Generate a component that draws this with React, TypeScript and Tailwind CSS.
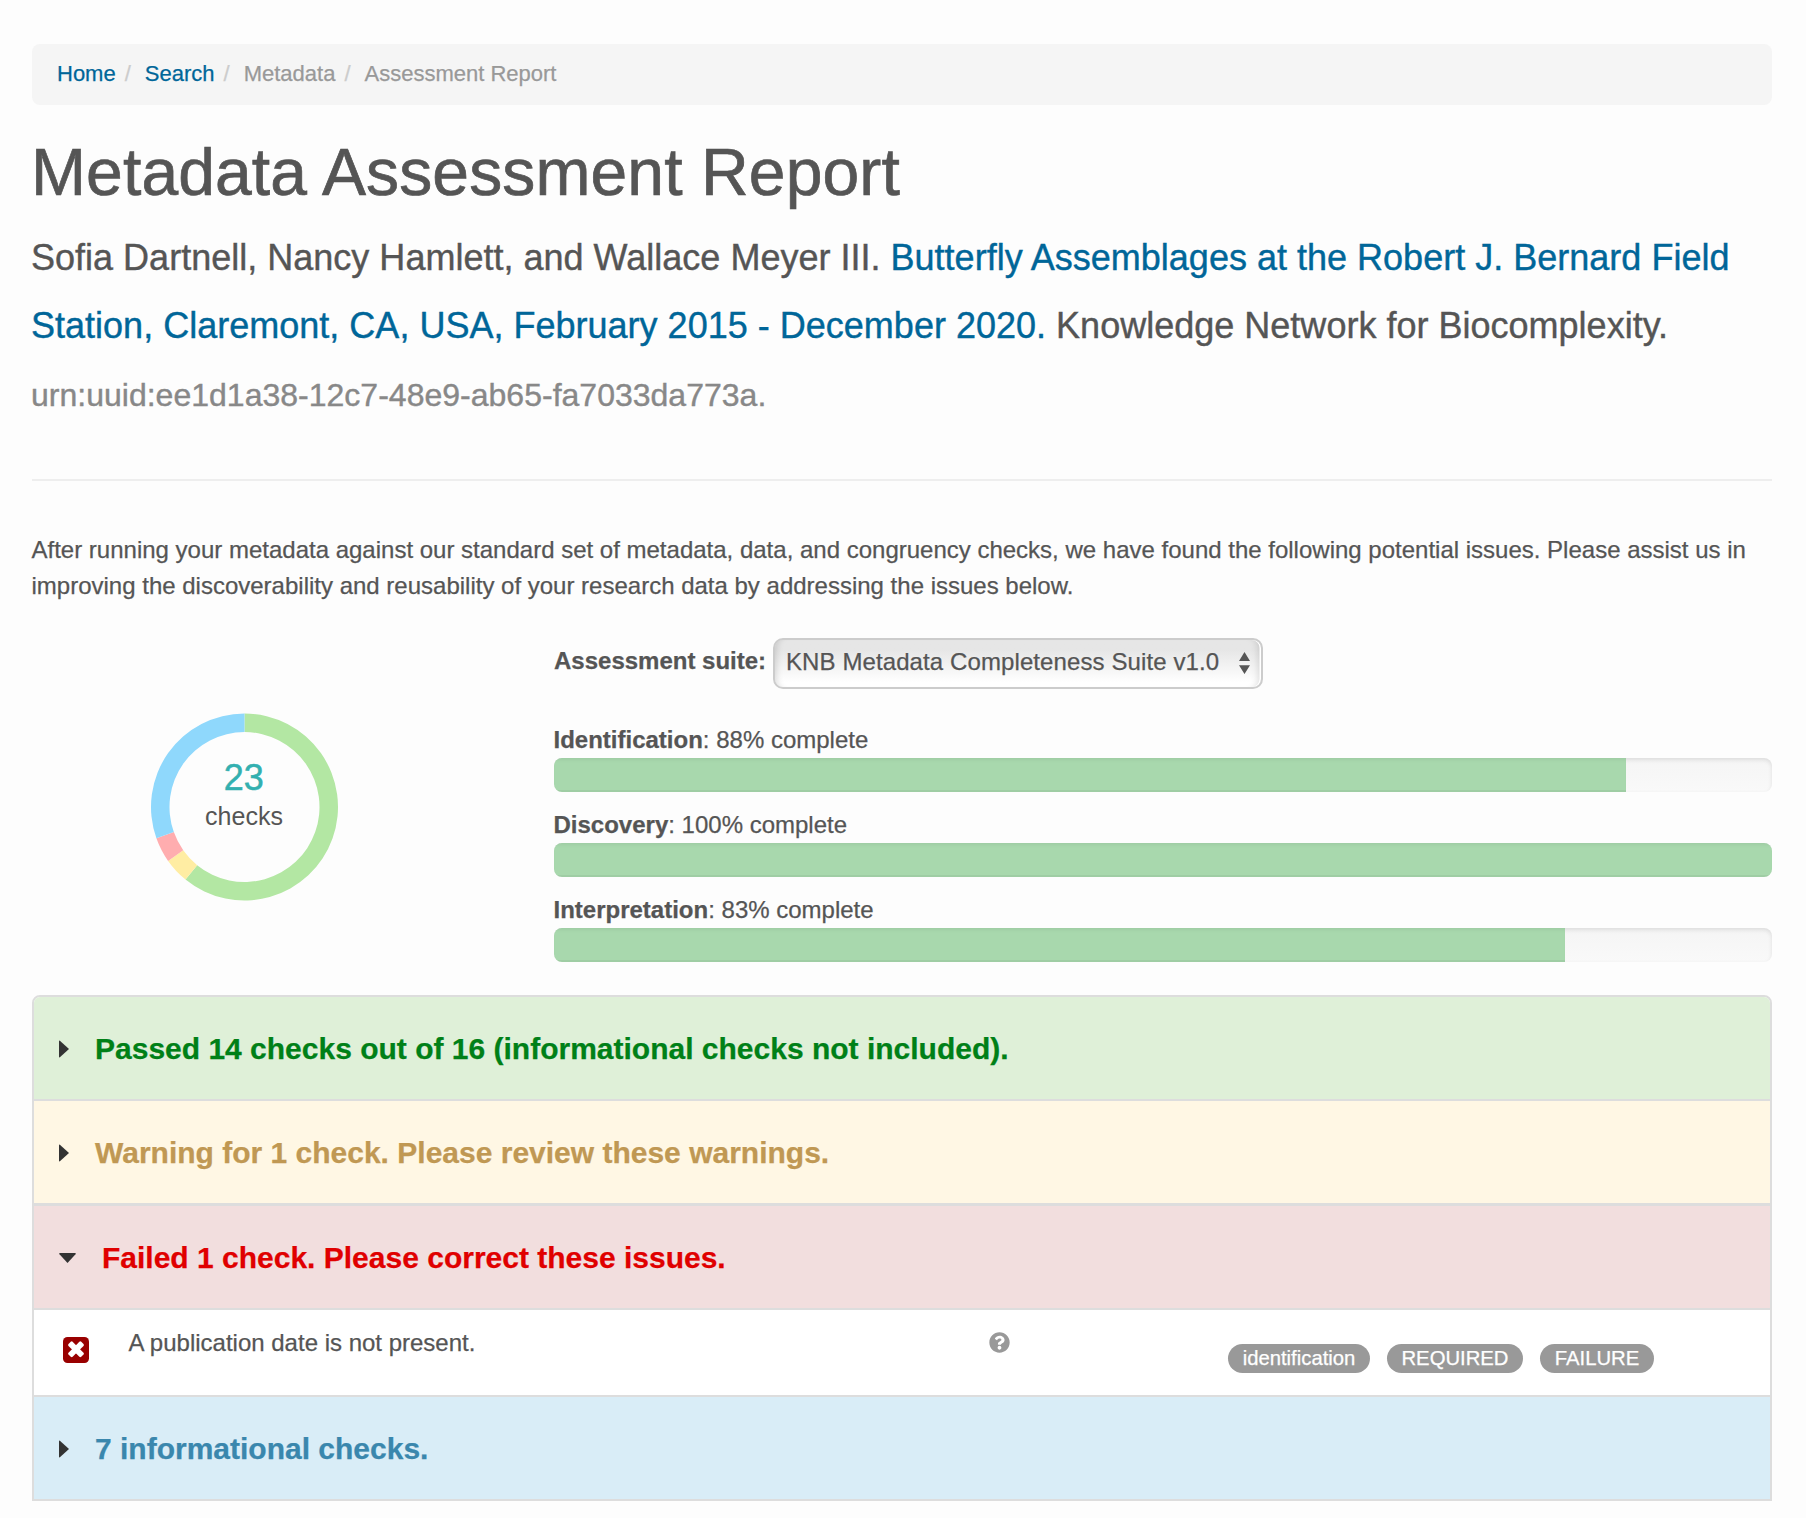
import type { ReactNode } from 'react';
import { FaQuestionCircle } from 'react-icons/fa';

const crumbs = [
  { label: 'Home', link: true },
  { label: 'Search', link: true },
  { label: 'Metadata', link: false },
  { label: 'Assessment Report', link: false },
];

const scores = [
  { name: 'Identification', percent: 88 },
  { name: 'Discovery', percent: 100 },
  { name: 'Interpretation', percent: 83 },
];

const segments = [
  { count: 14, color: '#b3e7a3' },
  { count: 1, color: '#ffeda3' },
  { count: 1, color: '#ffadaf' },
  { count: 7, color: '#8fd8fc' },
];

const TOTAL = 23;

function arcPath(from: number, to: number, outer: number, inner: number) {
  const point = (t: number, r: number) => {
    const a = t * 2 * Math.PI;
    return `${(Math.sin(a) * r).toFixed(3)} ${(-Math.cos(a) * r).toFixed(3)}`;
  };
  const large = to - from > 0.5 ? 1 : 0;
  return `M${point(from, outer)}A${outer} ${outer} 0 ${large} 1 ${point(to, outer)}L${point(to, inner)}A${inner} ${inner} 0 ${large} 0 ${point(from, inner)}Z`;
}

function Donut() {
  let start = 0;
  return (
    <svg className="block h-[188px] w-[188px]" viewBox="-94.5 -94 188 188">
      {segments.map((s) => {
        const from = start / TOTAL;
        start += s.count;
        return <path key={s.color} d={arcPath(from, start / TOTAL, 93.5, 75)} fill={s.color} />;
      })}
      <text x="-0.7" y="-17" textAnchor="middle" fontSize="36" fill="#33b0b0" stroke="#33b0b0" strokeWidth="0.5">
        23
      </text>
      <text x="-0.5" y="18" textAnchor="middle" fontSize="25" fill="#555">
        checks
      </text>
    </svg>
  );
}

function CaretRight() {
  return (
    <svg className="h-[18px] w-[10px] shrink-0" viewBox="0 0 10 18">
      <path d="M0 1.2Q0 .3 .9 .7L10 9L.9 17.3Q0 17.700 0 16.800Z" fill="#333" />
    </svg>
  );
}

function CaretDown() {
  return (
    <svg className="h-[10px] w-[17px] shrink-0" viewBox="0 0 17 10">
      <path d="M1 0H16Q17.400 .2 16.500 1.200L8.500 10L.5 1.200Q-.4 .2 1 0Z" fill="#333" />
    </svg>
  );
}

function GroupRow({ className, open, children }: { className: string; open?: boolean; children: ReactNode }) {
  return (
    <div className={`flex h-[102px] items-center pt-px pl-[25px] text-[30px] font-bold ${className}`}>
      {open ? <CaretDown /> : <CaretRight />}
      <span className="ml-[26px] whitespace-nowrap">{children}</span>
    </div>
  );
}

function Badge({ className, children }: { className: string; children: ReactNode }) {
  return (
    <span
      className={`flex h-[29px] items-center justify-center rounded-full bg-[#999] text-[20.3px] leading-none whitespace-nowrap text-white ${className}`}
    >
      {children}
    </span>
  );
}

export default function App() {
  return (
    <div className="min-h-[1518px] w-[1806px] bg-[#fdfdfd] pt-[44px] pr-[34px] pl-8 font-['Liberation_Sans',Arial,sans-serif] text-2xl leading-9 text-[#555] [-webkit-text-stroke:0.25px]">
      <nav className="flex h-[61px] rounded-lg bg-[#f5f5f5] pt-[12px] pl-[25px] text-[22px]">
        {crumbs.map((c, i) => (
          <span key={c.label} className="flex whitespace-nowrap">
            {i > 0 && <span className="pr-[14px] pl-[9px] text-[#ccc]">/</span>}
            <span className={c.link ? 'text-[#006699]' : 'text-[#999]'}>{c.label}</span>
          </span>
        ))}
      </nav>

      <h1 className="mt-[27px] -ml-px text-[66px] leading-[80px] tracking-[0.12px] whitespace-nowrap [-webkit-text-stroke:0.7px]">
        Metadata Assessment Report
      </h1>

      <p className="mt-[11.500px] -ml-px h-[204px] text-4xl leading-[68px] tracking-[0.01px] whitespace-nowrap [-webkit-text-stroke:0.4px]">
        Sofia Dartnell, Nancy Hamlett, and Wallace Meyer III.{' '}
        <span className="text-[#006699]">
          Butterfly Assemblages at the Robert J. Bernard Field
          <br />
          Station, Claremont, CA, USA, February 2015 - December 2020.
        </span>{' '}
        Knowledge Network for Biocomplexity.
        <br />
        <span className="text-[32px] leading-none text-[#888]">urn:uuid:ee1d1a38-12c7-48e9-ab65-fa7033da773a.</span>
      </p>

      <div className="mt-[51.500px] h-0.5 bg-[#eee]" />

      <p className="mt-[51px] -ml-[0.5px] whitespace-nowrap">
        After running your metadata against our standard set of metadata, data, and congruency checks, we have found the
        following potential issues. Please assist us in
        <br />
        improving the discoverability and reusability of your research data by addressing the issues below.
      </p>

      <section className="mt-[34px] flex h-[324px]">
        <div className="w-[522px] pt-[75px] pl-[118px]">
          <Donut />
        </div>
        <div className="w-[1218px]">
          <div className="flex">
            <span className="mt-[4.500px] w-[219px] font-bold whitespace-nowrap">Assessment suite:</span>
            <div className="flex h-[51px] w-[490px] justify-between rounded-[10px] border-2 border-[#ccc] bg-linear-to-b from-[#e6e6e6] from-20% to-white to-90% pr-[11px] pl-[11px] shadow-[inset_8px_0_6px_-6px_rgba(0,0,0,0.13),inset_-1.5px_0_0_#fff,inset_-9px_0_7px_-6px_rgba(0,0,0,0.13)]">
              <span className="mt-[3.500px] tracking-[0.1px] whitespace-nowrap">KNB Metadata Completeness Suite v1.0</span>
              <svg className="mt-[12px] h-[22px] w-[11px]" viewBox="0 0 11 22">
                <path d="M5.500 0L11 9H0ZM5.500 22L11 13.200H0Z" fill="#555" />
              </svg>
            </div>
          </div>
          <div className="mt-[33px] flex flex-col gap-[15px]">
            {scores.map((s) => (
              <div key={s.name}>
                <div className="-ml-[0.5px] h-9">
                  <b>{s.name}</b>: {s.percent}% complete
                </div>
                <div className="h-[34px] overflow-hidden rounded-lg bg-linear-to-b from-[#f5f5f5] to-[#f9f9f9] shadow-[inset_0_2px_4px_rgba(0,0,0,0.1)]">
                  <div
                    className="h-full bg-[#a8d8ad] shadow-[inset_0_-2px_0_rgba(0,0,0,0.05),inset_0_4px_4px_-3px_rgba(0,0,0,0.08)]"
                    style={{ width: `${s.percent}%` }}
                  />
                </div>
              </div>
            ))}
          </div>
        </div>
      </section>

      <section className="mt-[33px] overflow-hidden rounded-t-lg border-2 border-[#ddd] bg-white">
        <GroupRow className="bg-[#dff0d8] text-[#008017]">
          Passed 14 checks out of 16 (informational checks not included).
        </GroupRow>
        <div className="h-0.5 bg-[#ddd]" />
        <GroupRow className="bg-[#fff7e4] text-[#c09853]">Warning for 1 check. Please review these warnings.</GroupRow>
        <div className="h-[3px] bg-[#ddd]" />
        <GroupRow open className="bg-[#f2dede] text-[#e00000]">
          Failed 1 check. Please correct these issues.
        </GroupRow>
        <div className="h-0.5 bg-[#ddd]" />
        <div className="flex h-[85px] items-start">
          <svg className="mt-[27px] ml-[29px] h-[26px] w-[26px]" viewBox="0 0 26 26">
            <rect width="26" height="26" rx="4.500" fill="#900" />
            <g transform="translate(13 12.300) rotate(45)" fill="#fff">
              <rect x="-9" y="-2.900" width="18" height="5.800" rx="1.300" />
              <rect x="-2.900" y="-9" width="5.800" height="18" rx="1.300" />
            </g>
          </svg>
          <span className="mt-[14.500px] ml-[39.500px] w-[860.500px]">A publication date is not present.</span>
          <FaQuestionCircle className="mt-[22px] h-[21px] w-[21px] text-[#999]" />
          <div className="mt-[34px] ml-[218px] flex gap-[17px]">
            <Badge className="w-[142px]">identification</Badge>
            <Badge className="w-[136px]">REQUIRED</Badge>
            <Badge className="w-[114px]">FAILURE</Badge>
          </div>
        </div>
        <div className="h-0.5 bg-[#ddd]" />
        <GroupRow className="bg-[#d9edf7] text-[#3a87ad]">7 informational checks.</GroupRow>
      </section>
    </div>
  );
}
